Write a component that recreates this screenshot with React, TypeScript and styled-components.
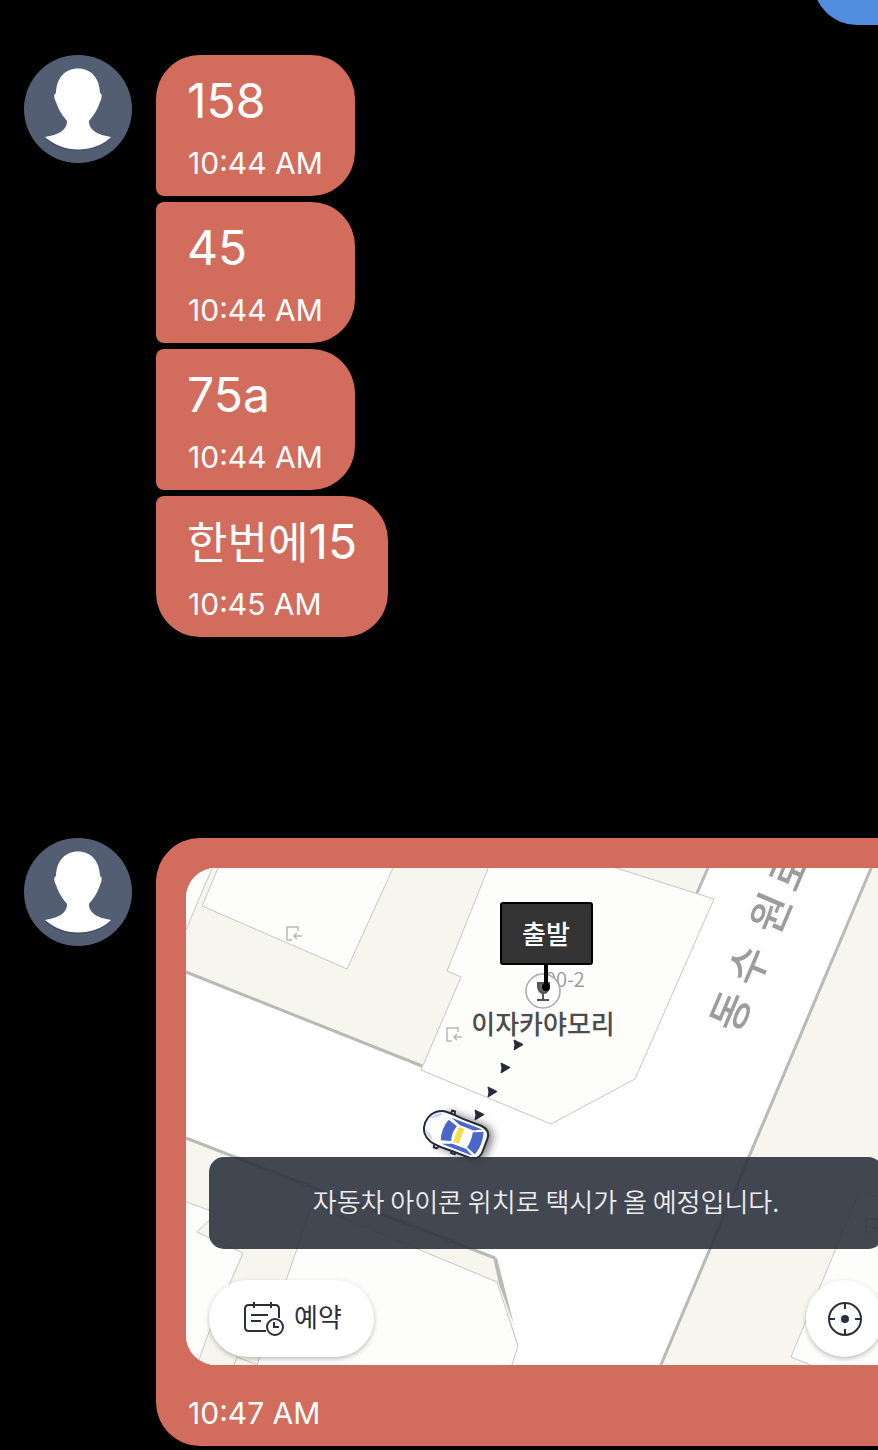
import React from "react";
import styled, { createGlobalStyle } from "styled-components";

const GlobalStyle = createGlobalStyle`
  *, *::before, *::after { box-sizing: border-box; }
  body {
    margin: 0;
    background: #000;
    color: #fff;
    font-family: Inter, "Noto Sans CJK KR", sans-serif;
  }
`;

const Conversation = styled.main`
  display: flex;
  flex-direction: column;
  min-height: 100vh;
  padding: 0 0 4px 24px;
  overflow: hidden;
`;

const SentBubble = styled.div`
  align-self: flex-end;
  width: 121px;
  height: 141px;
  margin: -116px -56px 30px 0;
  border-radius: 44px;
  background: #528de0;
`;

const Group = styled.section`
  display: flex;
  align-items: flex-start;
  gap: 24px;

  & + & {
    margin-top: 201px;
  }
`;

const AvatarImage = styled.svg`
  flex: none;
  width: 108px;
  height: 108px;
`;

const Bubbles = styled.div<{ $wide?: boolean }>`
  display: flex;
  flex-direction: column;
  align-items: ${(p) => (p.$wide ? "stretch" : "flex-start")};
  flex: 1;
  gap: 6px;
  margin-right: ${(p) => (p.$wide ? "-58px" : "0")};
`;

type Place = "first" | "middle" | "last" | "only";

const corners: Record<Place, string> = {
  first: "44px 44px 44px 8px",
  middle: "8px 44px 44px 8px",
  last: "8px 44px 44px 44px",
  only: "44px",
};

const Bubble = styled.article<{ $place: Place; $photo?: boolean }>`
  padding: ${(p) => (p.$photo ? "30px 30px 15px" : "16px 30px 15px")};
  border-radius: ${(p) => corners[p.$place]};
  background: #d26d5e;
`;

const Message = styled.p`
  margin: 0 0 14px;
  padding: 0 1px;
  font-size: 48px;
  font-weight: 400;
  line-height: 60px;
  white-space: nowrap;
`;

const Hangul = styled.span`
  font-family: "Noto Sans CJK KR", sans-serif;
  font-size: 44px;
  font-weight: 400;
  line-height: 1;
`;

const Time = styled.time`
  display: block;
  padding: 0 2px;
  font-size: 30px;
  font-weight: 400;
  line-height: 36px;
  white-space: nowrap;
`;

const Photo = styled.div`
  position: relative;
  display: flex;
  flex-direction: column;
  justify-content: flex-end;
  height: 497px;
  margin-bottom: 30px;
  padding: 0 23px 8px;
  border-radius: 30px;
  background: #fff;
  overflow: hidden;
  font-family: "Noto Sans CJK KR", sans-serif;
`;

const MapDrawing = styled.svg`
  position: absolute;
  top: 0;
  left: 0;
  width: 100%;
  height: 100%;
`;

const Notice = styled.p`
  position: relative;
  margin: 0 0 31px;
  border-radius: 15px;
  background: rgba(45, 51, 63, 0.9);
  color: #eceef0;
  font-size: 26px;
  font-weight: 350;
  line-height: 88px;
  padding-bottom: 4px;
  text-align: center;
  white-space: nowrap;
`;

const Controls = styled.div`
  position: relative;
  display: flex;
  justify-content: space-between;
`;

const MapButton = styled.button<{ $round?: boolean }>`
  display: flex;
  align-items: center;
  justify-content: center;
  gap: 10px;
  width: ${(p) => (p.$round ? "77px" : "165px")};
  height: 77px;
  padding: ${(p) => (p.$round ? "0" : "0 0 0 3px")};
  border: 0;
  border-radius: 39px;
  background: #fff;
  box-shadow: 0 2px 5px rgba(0, 0, 0, 0.25);
  color: #2a2f3b;
  font: 400 26px/36px "Noto Sans CJK KR", sans-serif;
`;

const ButtonLabel = styled.span`
  padding-bottom: 6px;
`;

function Avatar() {
  return (
    <AvatarImage viewBox="0 0 108 108" role="img" aria-label="Contact">
      <circle cx="54" cy="54" r="54" fill="#535e72" />
      <path
        transform="translate(0 2)"
        fill="#445066"
        d="M21 82C30 90 42 94 54 94S78 90 87 82Z"
      />
      <path
        fill="#fff"
        d="M54 13.500C41 13.500 32.500 23 32 38C29.500 39 30 43 32 47C35 56 39 61 43 66C43.500 75 34 80 21 82C30 90 42 94.500 54 94.500S80 90 87 82C74 80 64.500 75 65 66C69 61 73 56 76 47C78 43 78.500 39 76 38C75.500 23 67 13.500 54 13.500Z"
      />
    </AvatarImage>
  );
}

function Entrance({ x, y }: { x: number; y: number }) {
  return (
    <path
      transform={`translate(${x} ${y})`}
      d="M6 14H1V1H12V5M16 10H8M11 7L8 10L11 13"
      fill="none"
      stroke="#b9b9b9"
      strokeWidth="1.500"
    />
  );
}

const roadName = [
  { char: "동", x: 730, y: 1011 },
  { char: "수", x: 748, y: 965 },
  { char: "원", x: 770, y: 913 },
  { char: "로", x: 789, y: 870 },
];

const routeArrows = [
  { x: 514, y: 1040 },
  { x: 501, y: 1063 },
  { x: 488, y: 1087 },
  { x: 475, y: 1110 },
];

function Car() {
  return (
    <g transform="translate(455 1134) rotate(21)">
      <rect x="-20" y="-19" width="57" height="37" rx="12" fill="#000" opacity="0.5" filter="url(#shade)" />
      <path
        d="M-11 -17L-11 -21L-8 -21L-7 -17M-16 15L-15 20L-12 20L-10 16M3 16V19H7V16"
        fill="#fff"
        stroke="#252b3a"
        strokeWidth="2"
      />
      <path
        d="M-20 -17C-12 -19 -4 -17 4 -17H22Q32 -16 32 -7V7Q32 16 22 17H4C-4 17 -12 18 -20 16C-28 13 -32 7 -32 0S-28 -14 -20 -17Z"
        fill="#fff"
        stroke="#252b3a"
        strokeWidth="2"
      />
      <path d="M-29 -6Q-26 -13 -19 -15Q-20 -9 -29 -6ZM-29 6Q-26 12 -19 14Q-20 9 -29 6Z" fill="#cdd7fa" />
      <path
        d="M-11 -11Q-15 0 -11 11L-1 8Q-4 0 -1 -8ZM16 -8Q18 0 16 8L26 12Q30 0 26 -12ZM-9 -14H24L16 -10H1ZM-9 14H24L16 10H1Z"
        fill="#4a66c8"
      />
      <rect x="1" y="-8" width="6" height="16" rx="1" fill="#f7dc4b" />
    </g>
  );
}

function StreetMap() {
  return (
    <MapDrawing viewBox="186 868 720 497" preserveAspectRatio="xMinYMin slice" role="img" aria-label="지도">
      <defs>
        <filter id="shade" x="-50%" y="-50%" width="200%" height="200%">
          <feGaussianBlur stdDeviation="4" />
        </filter>
        <filter id="soft">
          <feGaussianBlur stdDeviation="0.700" />
        </filter>
      </defs>
      <g fill="#f6f6ef">
        <path d="M186 868H708L697 893L500 1000L422 1067L186 972Z" />
        <path d="M871 868H906V1365H660Z" />
        <path d="M186 1138L495 1258L517 1340L511 1365H186Z" />
      </g>
      <g fill="#fdfdfb" stroke="#c6c6c6" strokeWidth="1">
        <path d="M213 866L186 930L184 866Z" />
        <path d="M219 866L202 906L347 969L394 866Z" />
        <path d="M489 866L447 971L461 977L421 1070L551 1124L635 1079L714 899L610 866Z" />
        <path d="M184 1201L217 1213L197 1232L243 1253L209 1332L196 1368H184Z" />
        <path d="M312 1205L497 1282L518 1346L511 1368H256Z" />
        <path d="M233 1368L237 1357L260 1366" fill="none" />
        <path d="M908 1208L860 1190L791 1357L818 1368H908Z" />
      </g>
      <g fill="none" stroke="#b8bab6" strokeWidth="3" filter="url(#soft)">
        <path d="M186 972L422 1066" />
        <path d="M708 868L697 893" />
        <path d="M872 866L660 1367" />
        <path d="M186 1138L495 1258" />
      </g>
      <path d="M493 1257L497 1258L514 1325L499 1284Z" fill="#b8bab6" />
      <Entrance x={286} y={926} />
      <Entrance x={446} y={1027} />
      <Entrance x={865} y={1218} />
      <g fill="#9c9c9c" fontSize="42" fontWeight="500" textAnchor="middle" filter="url(#soft)">
        {roadName.map((s) => (
          <text key={s.char} transform={`translate(${s.x} ${s.y}) rotate(-67)`} y="16">
            {s.char}
          </text>
        ))}
      </g>
      <text x="545" y="987" fontSize="20" fontWeight="350" fill="#999">
        00-2
      </text>
      <circle cx="543" cy="991" r="17" fill="#fff" stroke="#aaa" strokeWidth="1.500" />
      <path d="M538 983H549V987Q548 993 543.500 993T538 987Z" fill="#666" stroke="#555" strokeWidth="2" />
      <path d="M543 993V1000M537 1000H549" stroke="#555" strokeWidth="2" />
      <path d="M546 964V987" stroke="#000" strokeWidth="4" />
      <circle cx="546" cy="987" r="4" fill="#000" />
      <rect x="501" y="903" width="91" height="61" rx="2" fill="#333" stroke="#000" strokeWidth="2" />
      <text x="546" y="944" fontSize="26" fontWeight="500" fill="#fff" textAnchor="middle">
        출발
      </text>
      <text x="543" y="1034" fontSize="26" fontWeight="500" fill="#4c4c4c" textAnchor="middle">
        이자카야모리
      </text>
      {routeArrows.map((a) => (
        <path
          key={a.y}
          transform={`translate(${a.x} ${a.y})`}
          d="M0 0L9 4.500L0 10L1 5Z"
          fill="#252b3a"
          stroke="#252b3a"
          strokeLinejoin="round"
        />
      ))}
      <Car />
    </MapDrawing>
  );
}

function ReserveIcon() {
  return (
    <svg width="40" height="34" viewBox="0 0 40 34" fill="none" stroke="#2a2f3b" strokeWidth="2" aria-hidden="true">
      <path d="M22 29H5Q1 29 1 25V7Q1 3 5 3H31Q35 3 35 7V16M10 0V6M27 0V6M7 13H24M7 19H17" />
      <circle cx="31" cy="25" r="8" />
      <path d="M30 20V25H35" />
    </svg>
  );
}

function TargetIcon() {
  return (
    <svg width="34" height="34" viewBox="0 0 34 34" fill="none" stroke="#2a2f3b" strokeWidth="2" aria-hidden="true">
      <circle cx="17" cy="17" r="16" />
      <path d="M17 1V7M17 27V33M1 17H7M27 17H33" />
      <circle cx="17" cy="17" r="4" fill="#2a2f3b" stroke="none" />
    </svg>
  );
}

const messages: { text: React.ReactNode; time: string; place: Place }[] = [
  { text: "158", time: "10:44 AM", place: "first" },
  { text: "45", time: "10:44 AM", place: "middle" },
  { text: "75a", time: "10:44 AM", place: "middle" },
  { text: <><Hangul>한번에</Hangul>15</>, time: "10:45 AM", place: "last" },
];

export default function App() {
  return (
    <>
      <GlobalStyle />
      <Conversation>
        <SentBubble />
        <Group>
          <Avatar />
          <Bubbles>
            {messages.map((m, i) => (
              <Bubble key={i} $place={m.place}>
                <Message>{m.text}</Message>
                <Time>{m.time}</Time>
              </Bubble>
            ))}
          </Bubbles>
        </Group>
        <Group>
          <Avatar />
          <Bubbles $wide>
            <Bubble $place="only" $photo>
              <Photo>
                <StreetMap />
                <Notice>자동차 아이콘 위치로 택시가 올 예정입니다.</Notice>
                <Controls>
                  <MapButton type="button">
                    <ReserveIcon />
                    <ButtonLabel>예약</ButtonLabel>
                  </MapButton>
                  <MapButton type="button" $round aria-label="현재 위치">
                    <TargetIcon />
                  </MapButton>
                </Controls>
              </Photo>
              <Time>10:47 AM</Time>
            </Bubble>
          </Bubbles>
        </Group>
      </Conversation>
    </>
  );
}
